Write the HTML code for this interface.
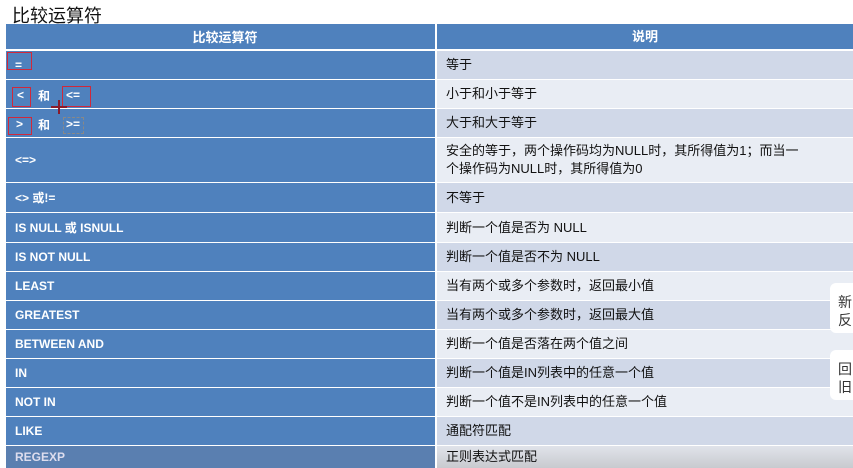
<!DOCTYPE html>
<html><head><meta charset="utf-8"><style>
body{margin:0;width:853px;height:468px;overflow:hidden;background:#fff;font-family:"Liberation Sans","Noto Sans CJK SC",sans-serif;position:relative}
.title{position:absolute;left:12px;top:2px;font-size:18px;color:#111}
.row{position:absolute;left:6px;width:847px;display:flex}
.l{width:431px;background:#4f81bd;color:#fff;font-weight:bold;font-size:12px;padding-left:9px;box-sizing:border-box;display:flex;align-items:center;border-right:2px solid #fff;position:relative}
.r{flex:1;font-size:13px;color:#111;padding-left:9px;display:flex;align-items:center;line-height:18px}
.d{background:#d0d8e8}.w{background:#e9edf4}
.box{position:absolute;border:1.5px solid #d0283a;box-sizing:border-box}
.t{position:absolute;top:8px;line-height:14px}
.c{top:9px}
.side{position:absolute;left:830px;width:30px;height:50px;background:#fff;border-radius:6px;font-size:14px;color:#333;padding:10px 0 0 8px;box-sizing:border-box;line-height:18px}
</style></head><body>
<div class="title">比较运算符</div>
<div class="row" style="top:24px;height:25px"><div class="l" style="justify-content:center;font-size:13px">比较运算符</div><div class="r" style="background:#4f81bd;color:#fff;font-weight:bold;justify-content:center;padding:0">说明</div></div>
<div class="row" style="top:51px;height:28px"><div class="l">=</div><div class="r d">等于</div></div>
<div class="row" style="top:80px;height:28px"><div class="l"><span class="t" style="left:11px">&lt;</span><span class="t c" style="left:32px">和</span><span class="t" style="left:60px">&lt;=</span></div><div class="r w">小于和小于等于</div></div>
<div class="row" style="top:109px;height:28px"><div class="l"><span class="t" style="left:10px">&gt;</span><span class="t c" style="left:32px">和</span><span class="t" style="left:60px">&gt;=</span></div><div class="r d">大于和大于等于</div></div>
<div class="row" style="top:138px;height:44px"><div class="l">&lt;=&gt;</div><div class="r w">安全的等于，两个操作码均为NULL时，其所得值为1；而当一<br>个操作码为NULL时，其所得值为0</div></div>
<div class="row" style="top:183px;height:29px"><div class="l">&lt;&gt; 或!=</div><div class="r d">不等于</div></div>
<div class="row" style="top:213px;height:29px"><div class="l">IS NULL 或 ISNULL</div><div class="r w">判断一个值是否为 NULL</div></div>
<div class="row" style="top:243px;height:28px"><div class="l">IS NOT NULL</div><div class="r d">判断一个值是否不为 NULL</div></div>
<div class="row" style="top:272px;height:28px"><div class="l">LEAST</div><div class="r w">当有两个或多个参数时，返回最小值</div></div>
<div class="row" style="top:301px;height:28px"><div class="l">GREATEST</div><div class="r d">当有两个或多个参数时，返回最大值</div></div>
<div class="row" style="top:330px;height:28px"><div class="l">BETWEEN AND</div><div class="r w">判断一个值是否落在两个值之间</div></div>
<div class="row" style="top:359px;height:28px"><div class="l">IN</div><div class="r d">判断一个值是IN列表中的任意一个值</div></div>
<div class="row" style="top:388px;height:28px"><div class="l">NOT IN</div><div class="r w">判断一个值不是IN列表中的任意一个值</div></div>
<div class="row" style="top:417px;height:28px"><div class="l">LIKE</div><div class="r d">通配符匹配</div></div>
<div class="row" style="top:446px;height:22px"><div class="l" style="background:#5a7fb0;color:#dde">REGEXP</div><div class="r" style="background:linear-gradient(#e0e3ea,#c8cacf)">正则表达式匹配</div></div>
<div class="box" style="left:7px;top:52px;width:25px;height:18px"></div>
<div class="box" style="left:12px;top:87px;width:19px;height:20px"></div>
<div class="box" style="left:62px;top:86px;width:29px;height:21px"></div>
<div class="box" style="left:8px;top:117px;width:24px;height:18px"></div>
<div class="box" style="left:63px;top:117px;width:21px;height:17px;border:1.5px dashed #888"></div>
<div style="position:absolute;left:51px;top:106px;width:16px;height:2px;background:#8a1a2a"></div>
<div style="position:absolute;left:58px;top:100px;width:2px;height:14px;background:#8a1a2a"></div>
<div class="side" style="top:283px">新<br>反</div>
<div class="side" style="top:350px">回<br>旧</div>
</body></html>
